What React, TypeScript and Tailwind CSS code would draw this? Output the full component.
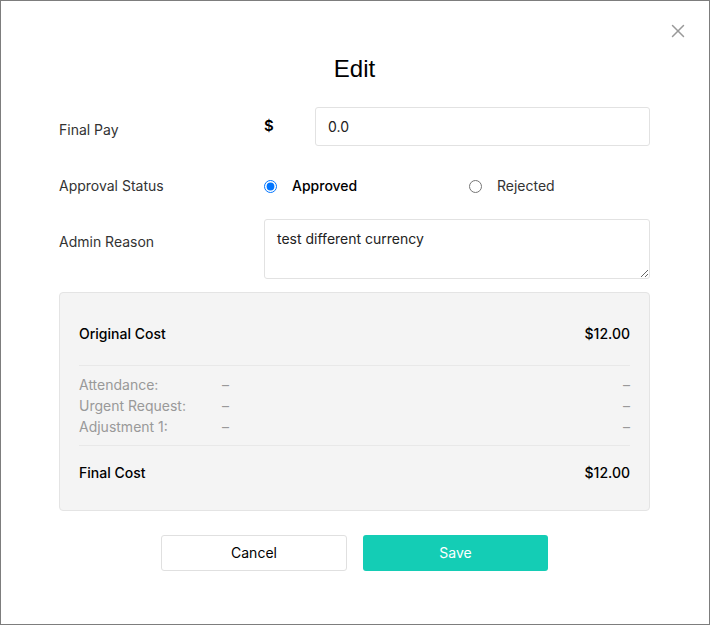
import { X } from 'lucide-react'

const adjustments = ['Attendance:', 'Urgent Request:', 'Adjustment 1:']

export default function App() {
  return (
    <div className="relative w-[710px] h-[625px] border border-[#7d7d7d] bg-white text-[#222] font-['Inter',sans-serif]">
      {/* close */}
      <button className="absolute right-[20px] top-[19px] text-[#999]">
        <X className="h-[22px] w-[22px]" strokeWidth={1.6} />
      </button>

      <div className="pt-[54px] pl-[58px] pr-[59px]">
        <h2 className="text-center text-[24px] leading-[28px] font-['Liberation_Sans',sans-serif] text-black">Edit</h2>

        {/* Final pay */}
        <div className="mt-[24px] flex">
          <div className="w-[205px] pt-[13px] text-sm leading-5 text-[#333]">Final Pay</div>
          <div className="w-[51px] pt-[9px] text-[15px] font-semibold leading-5 text-black">$</div>
          <input
            defaultValue="0.0"
            className="h-[39px] flex-1 rounded-[3px] border border-[#e2e2e2] px-[12px] text-sm text-[#222] outline-none"
          />
        </div>

        {/* Approval */}
        <div className="mt-[30px] flex items-center text-sm leading-5">
          <div className="w-[205px] text-[#333]">Approval Status</div>
          <label className="flex w-[205px] items-center gap-[15px] font-medium text-black">
            <input type="radio" name="status" defaultChecked className="m-0 h-[13px] w-[13px]" />
            Approved
          </label>
          <label className="flex items-center gap-[15px] text-[#333]">
            <input type="radio" name="status" className="m-0 h-[13px] w-[13px]" />
            Rejected
          </label>
        </div>

        {/* Reason */}
        <div className="mt-[23px] flex">
          <div className="w-[205px] pt-[13px] text-sm leading-5 text-[#333]">Admin Reason</div>
          <textarea
            defaultValue="test different currency"
            className="h-[60px] flex-1 resize-y rounded-[3px] border border-[#e2e2e2] px-[12px] py-[9px] text-sm leading-5 text-[#222] outline-none"
          />
        </div>

        {/* Summary */}
        <div className="mt-[13px] rounded-[4px] border border-[#e4e4e4] bg-[#f4f4f4] px-[19px] pt-[31px] pb-[27px]">
          <div className="flex justify-between text-sm font-medium leading-5 text-black">
            <span>Original Cost</span>
            <span>$12.00</span>
          </div>
          <div className="mt-[21px] border-t border-[#e8e8e8]" />
          <div className="py-[8px] text-sm leading-[21px] text-[#999]">
            {adjustments.map(a => (
              <div key={a} className="flex">
                <span className="w-[143px]">{a}</span>
                <span className="flex-1">–</span>
                <span>–</span>
              </div>
            ))}
          </div>
          <div className="border-t border-[#e8e8e8]" />
          <div className="mt-[17px] flex justify-between text-sm font-medium leading-5 text-black">
            <span>Final Cost</span>
            <span>$12.00</span>
          </div>
        </div>

        {/* Buttons */}
        <div className="mt-[24px] flex justify-center gap-[16px]">
          <button className="h-[36px] w-[186px] rounded-[3px] border border-[#e0e0e0] bg-white text-sm text-black">Cancel</button>
          <button className="h-[36px] w-[185px] rounded-[3px] bg-[#14cdb5] text-sm text-white">Save</button>
        </div>
      </div>
    </div>
  )
}
